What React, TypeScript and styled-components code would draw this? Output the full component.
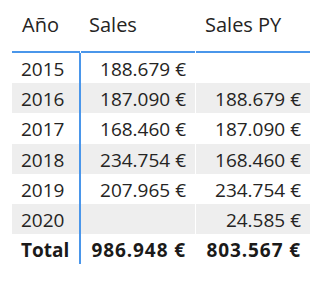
import React from "react";
import styled, { createGlobalStyle } from "styled-components";

const Global = createGlobalStyle`
  html, body { margin: 0; padding: 0; background: #ffffff; }
  body { font-family: "Open Sans", "Noto Sans", sans-serif; color: #252423; }
`;

const Wrap = styled.div`
  padding-left: 12px;
  width: 298px;
`;

const Table = styled.div`
  display: grid;
  grid-template-columns: 68px 114px 114px;
  column-gap: 1px;
  background: #ffffff;
`;

const HeadCell = styled.div`
  height: 51px;
  box-sizing: border-box;
  padding: 11px 0 0 ${(p: { $pad: number }) => p.$pad}px;
  font-size: 20px;
  line-height: 27px;
  color: #252423;
  border-bottom: 2px solid #4a96ea;
  height: 53px;
  white-space: nowrap;
`;

const Cell = styled.div<{ $alt: boolean; $first?: boolean; $total?: boolean; $right?: boolean }>`
  height: 30.2px;
  box-sizing: border-box;
  display: flex;
  align-items: center;
  justify-content: ${(p) => (p.$right ? "flex-end" : "flex-start")};
  padding: 2px ${(p) => (p.$right ? "9px" : "0")} 0 ${(p) => (p.$right ? "0" : "9px")};
  background: ${(p) => (p.$alt ? "#eeeeee" : "#ffffff")};
  font-size: 19px;
  line-height: 26px;
  font-weight: ${(p) => (p.$total ? 700 : 400)};
  letter-spacing: ${(p) => (p.$total && p.$right ? "0.9px" : "0")};
  color: ${(p) => (p.$total ? "#1b1a19" : "#252423")};
  white-space: nowrap;
  ${(p) =>
    p.$first
      ? `border-right: 1px solid #4a96ea; box-shadow: 1px 0 0 #4a96ea;`
      : ""}
`;

const rows: [string, string, string][] = [
  ["2015", "188.679 €", ""],
  ["2016", "187.090 €", "188.679 €"],
  ["2017", "168.460 €", "187.090 €"],
  ["2018", "234.754 €", "168.460 €"],
  ["2019", "207.965 €", "234.754 €"],
  ["2020", "", "24.585 €"],
];

export default function App() {
  return (
    <>
      <Global />
      <Wrap>
        <Table>
          <HeadCell $pad={10}>Año</HeadCell>
          <HeadCell $pad={8}>Sales</HeadCell>
          <HeadCell $pad={9}>Sales PY</HeadCell>
          {rows.map((r, i) => {
            const alt = i % 2 === 1;
            return (
              <React.Fragment key={r[0]}>
                <Cell $alt={alt} $first>{r[0]}</Cell>
                <Cell $alt={alt} $right>{r[1]}</Cell>
                <Cell $alt={alt} $right>{r[2]}</Cell>
              </React.Fragment>
            );
          })}
          <Cell $alt={false} $first $total>Total</Cell>
          <Cell $alt={false} $right $total>986.948 €</Cell>
          <Cell $alt={false} $right $total>803.567 €</Cell>
        </Table>
      </Wrap>
    </>
  );
}
